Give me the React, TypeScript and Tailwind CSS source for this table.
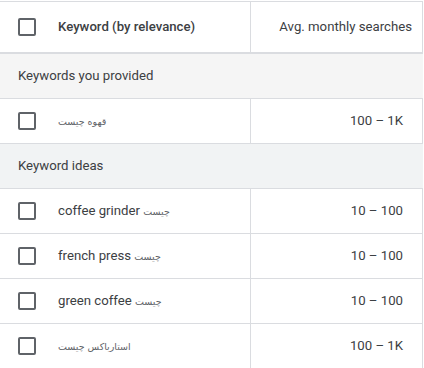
import React from "react";

type Row = { kw: React.ReactNode; searches: string };

function Fa({ children }: { children: string }) {
  return (
    <span dir="rtl" className="text-[9.5px] text-[#5f6368]" style={{ fontFamily: '"DejaVu Sans", sans-serif' }}>
      {children}
    </span>
  );
}

const provided: Row[] = [{ kw: <Fa>قهوه چیست</Fa>, searches: "100 – 1K" }];

const ideas: Row[] = [
  { kw: <>coffee grinder <Fa>چیست</Fa></>, searches: "10 – 100" },
  { kw: <>french press <Fa>چیست</Fa></>, searches: "10 – 100" },
  { kw: <>green coffee <Fa>چیست</Fa></>, searches: "10 – 100" },
  { kw: <Fa>استارباکس چیست</Fa>, searches: "100 – 1K" },
];

function Checkbox() {
  return <div className="h-[18px] w-[18px] shrink-0 rounded-[2px] border-2 border-[#5f6368]" />;
}

function GroupRow({ label, bg }: { label: string; bg: string }) {
  return (
    <div className={`flex h-[45px] items-center border-b border-[#dadce0] px-[18px] text-[13.2px] text-[#3c4043] ${bg}`}>
      {label}
    </div>
  );
}

function DataRow({ row }: { row: Row }) {
  return (
    <div className="flex h-[45px] border-b border-[#dadce0] text-[13.2px] text-[#3c4043]">
      <div className="flex w-[251px] items-center border-r border-[#dadce0] pl-[18px]">
        <Checkbox />
        <span className="ml-[22px] whitespace-nowrap">{row.kw}</span>
      </div>
      <div className="flex w-[172px] items-center justify-end border-r border-[#dadce0] pr-[19px]">
        {row.searches}
      </div>
    </div>
  );
}

export default function App() {
  return (
    <div
      className="h-[368px] w-[424px] overflow-hidden bg-white pt-px"
      style={{ fontFamily: 'Roboto, "DejaVu Sans", sans-serif' }}
    >
      <div className="w-[423px] border-t border-[#dadce0]">
        {/* header */}
        <div className="flex h-[52px] border-b-2 border-[#dadce0] text-[13.2px] text-[#3c4043]">
          <div className="flex w-[251px] items-center border-r border-[#dadce0] pl-[18px]">
            <Checkbox />
            <span className="ml-[22px] font-medium">Keyword (by relevance)</span>
          </div>
          <div className="flex w-[172px] items-center justify-end border-r border-[#dadce0] pr-[10px]">
            Avg. monthly searches
          </div>
        </div>

        <GroupRow label="Keywords you provided" bg="bg-[#f5f5f5]" />
        {provided.map((r, i) => (
          <DataRow key={i} row={r} />
        ))}

        <GroupRow label="Keyword ideas" bg="bg-[#f1f3f4]" />
        {ideas.map((r, i) => (
          <DataRow key={i} row={r} />
        ))}
      </div>
    </div>
  );
}
